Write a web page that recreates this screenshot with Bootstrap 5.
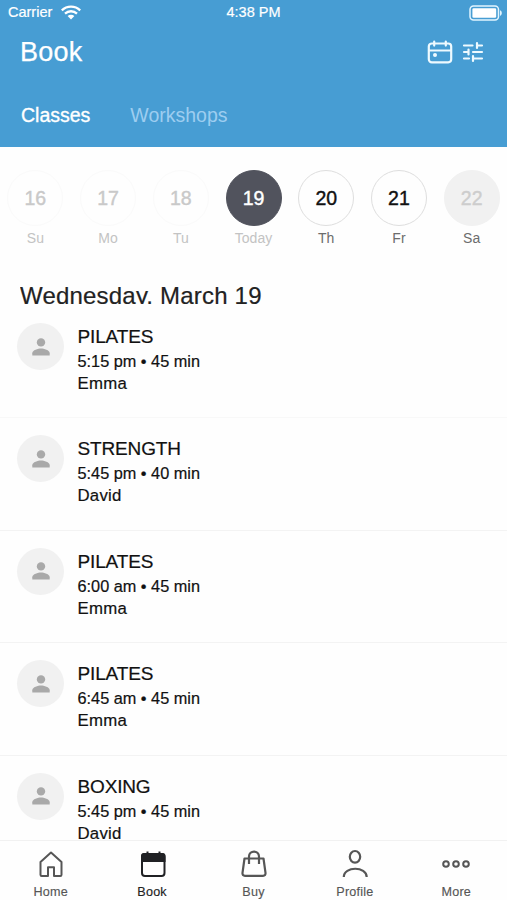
<!DOCTYPE html>
<html lang="en">
<head>
<meta charset="utf-8">
<meta name="viewport" content="width=device-width, initial-scale=1">
<title>Book</title>
<link href="https://cdn.jsdelivr.net/npm/bootstrap@5.3.0/dist/css/bootstrap.min.css" rel="stylesheet">
<style>
body{font-family:"Liberation Sans",Arial,sans-serif;color:#111;background:#fefefe;line-height:1}
.app{height:900px}
.top-bar{height:147px;background:#479dd3;color:#fff}
.status{height:25px;font-size:14.5px;padding:0 4px 0 8px;-webkit-text-stroke:.2px}
.status>*{flex:1 1 0}
.title-row{height:54px;padding:0 22px 0 20px}
.title-row h1{font-size:27px;letter-spacing:.2px;-webkit-text-stroke:.25px}
.tabs{font-size:19.5px;padding:27px 21px 0;gap:40px}
.tabs .active{-webkit-text-stroke:.35px}
.tabs .idle{color:#9dcdf0}
.days{padding-top:23px;margin:0 -1px}
.day{font-size:14px;color:#6c6c6c}
.disc{width:56px;height:56px;font-size:19.5px;padding-top:2px;border:1px solid #dedede;color:#111;-webkit-text-stroke:.4px;margin-bottom:5px}
.past{color:#c3c3c3}
.past .disc{color:#c9c9c9;border-color:#fafafa}
.today{color:#c3c3c3}
.today .disc{background:#51535d;border-color:#51535d;color:#fff}
.full .disc{background:#f1f1f1;border-color:#f1f1f1;color:#cdcdcd}
.date-title{font-size:24px;line-height:24px;height:20px;letter-spacing:.2px;margin:39px 0 1px 20px;color:#222;-webkit-text-stroke:.2px}
.session{height:112.5px;padding:17.2px 0 0 17px;gap:13.5px;border-bottom:1px solid #f3f3f3}
.session:first-child{height:113px;padding-top:18px;border-color:#f8f8f8}
.avatar{width:47px;height:47px;background:#f1f1f1}
.info{-webkit-text-stroke:.2px;padding-top:3px}
.name{font-size:19px;line-height:22px;letter-spacing:-.15px}
.when{font-size:16.3px;line-height:24px;margin-top:1px}
.coach{font-size:16.8px;line-height:22px;letter-spacing:.25px}
.tab-bar{height:60px;background:#fefefe;border-top:1px solid #f1f1f1;font-size:12.6px;color:#565656;letter-spacing:.2px;-webkit-text-stroke:.15px}
.tab-bar svg{margin:7px 0 8px}
.tab-bar .current{color:#222}
</style>
<script src="https://cdn.jsdelivr.net/npm/bootstrap@5.3.0/dist/js/bootstrap.bundle.min.js"></script>
</head>
<body>
<svg class="d-none"><symbol id="person" viewBox="0 0 18 18"><circle cx="9" cy="4.4" r="4.2" fill="#a9a9a9"/><path d="M.3 17.500v-2.200c0-3.100 5.800-4.700 8.700-4.700s8.700 1.600 8.700 4.700v2.200z" fill="#a9a9a9"/></symbol></svg>
<div class="app d-flex flex-column overflow-hidden">
  <header class="top-bar flex-shrink-0">
    <div class="status d-flex align-items-center">
      <div class="d-flex align-items-center gap-2"><span>Carrier</span>
        <svg width="21" height="15" viewBox="-1 0 21 15" fill="none" stroke="#fff" stroke-width="2.3"><path d="M.8 5.300c5.200-5 13.200-5 18.400 0M4 8.700c3.500-3.300 8.500-3.300 12 0"/><path d="M6.600 11.100c2-1.800 4.800-1.800 6.800 0L10 14.400z" fill="#fff" stroke="none"/></svg>
      </div>
      <div class="text-center pe-1">4:38 PM</div>
      <div class="text-end">
        <svg class="d-block ms-auto" width="34" height="16" viewBox="0 0 34 16"><rect x="1" y="1" width="28.500" height="14" rx="3.500" fill="none" stroke="#e2f5ff" stroke-width="1.500"/><rect x="3.400" y="3.300" width="23.800" height="9.400" rx="1.300" fill="#fff"/><path d="M31 5.200c2.400.8 2.400 4.800 0 5.600z" fill="#e2f5ff"/></svg>
      </div>
    </div>
    <div class="title-row d-flex align-items-center justify-content-between">
      <h1 class="m-0 fw-normal lh-1">Book</h1>
      <div class="d-flex align-items-center gap-2">
        <svg width="26" height="24" viewBox="0 0 26 24" fill="none" stroke="#eefaff" stroke-width="2.200" stroke-linecap="round"><rect x="1.800" y="3.500" width="22.400" height="18.800" rx="3"/><path d="M2 10.500h22M7.200 1.600v4M18.800 1.600v4"/><circle cx="8" cy="15" r="2" fill="#eefaff" stroke="none"/></svg>
        <svg width="24" height="22" viewBox="0 0 22 22" fill="none" stroke="#eefaff" stroke-width="2.200" stroke-linecap="round"><path d="M2 4.500h8.500M15 4.500h5M15 2v5M2 11h4M6.500 8.500v5M11 11h9M2 17.500h5M11 17.500h9M11 15v5"/></svg>
      </div>
    </div>
    <nav class="tabs d-flex"><span class="active">Classes</span><span class="idle">Workshops</span></nav>
  </header>

  <main class="flex-grow-1 overflow-hidden">
    <div class="days d-flex text-center">
      <div class="day past col d-flex flex-column align-items-center"><div class="disc rounded-circle d-flex align-items-center justify-content-center">16</div>Su</div>
      <div class="day past col d-flex flex-column align-items-center"><div class="disc rounded-circle d-flex align-items-center justify-content-center">17</div>Mo</div>
      <div class="day past col d-flex flex-column align-items-center"><div class="disc rounded-circle d-flex align-items-center justify-content-center">18</div>Tu</div>
      <div class="day today col d-flex flex-column align-items-center"><div class="disc rounded-circle d-flex align-items-center justify-content-center">19</div>Today</div>
      <div class="day col d-flex flex-column align-items-center"><div class="disc rounded-circle d-flex align-items-center justify-content-center">20</div>Th</div>
      <div class="day col d-flex flex-column align-items-center"><div class="disc rounded-circle d-flex align-items-center justify-content-center">21</div>Fr</div>
      <div class="day full col d-flex flex-column align-items-center"><div class="disc rounded-circle d-flex align-items-center justify-content-center">22</div>Sa</div>
    </div>
    <h2 class="date-title fw-normal overflow-hidden">Wednesday, March 19</h2>
    <div>
      <div class="session d-flex"><div class="avatar rounded-circle d-flex align-items-center justify-content-center"><svg width="18" height="18"><use href="#person"/></svg></div><div class="info"><div class="name">PILATES</div><div class="when">5:15 pm • 45 min</div><div class="coach">Emma</div></div></div>
      <div class="session d-flex"><div class="avatar rounded-circle d-flex align-items-center justify-content-center"><svg width="18" height="18"><use href="#person"/></svg></div><div class="info"><div class="name">STRENGTH</div><div class="when">5:45 pm • 40 min</div><div class="coach">David</div></div></div>
      <div class="session d-flex"><div class="avatar rounded-circle d-flex align-items-center justify-content-center"><svg width="18" height="18"><use href="#person"/></svg></div><div class="info"><div class="name">PILATES</div><div class="when">6:00 am • 45 min</div><div class="coach">Emma</div></div></div>
      <div class="session d-flex"><div class="avatar rounded-circle d-flex align-items-center justify-content-center"><svg width="18" height="18"><use href="#person"/></svg></div><div class="info"><div class="name">PILATES</div><div class="when">6:45 am • 45 min</div><div class="coach">Emma</div></div></div>
      <div class="session d-flex"><div class="avatar rounded-circle d-flex align-items-center justify-content-center"><svg width="18" height="18"><use href="#person"/></svg></div><div class="info"><div class="name">BOXING</div><div class="when">5:45 pm • 45 min</div><div class="coach">David</div></div></div>
    </div>
  </main>

  <nav class="tab-bar d-flex flex-shrink-0 text-center">
    <div class="col d-flex flex-column align-items-center"><svg width="30" height="30" viewBox="0 0 30 30" fill="none" stroke="#565656" stroke-width="2" stroke-linejoin="round"><path d="M15 4.500L4.500 14v12.800q0 1.200 1.200 1.200H12v-8.700h6v8.700h6.300q1.200 0 1.200-1.200V14z"/></svg>Home</div>
    <div class="current col d-flex flex-column align-items-center"><svg width="30" height="30" viewBox="-1 0 30 30" fill="none" stroke="#202124" stroke-width="2"><rect x="4" y="6" width="22.500" height="22" rx="3"/><path d="M4 13V8q0-2 2-2h18.500q2 0 2 2v5z" fill="#202124"/><path d="M9.500 3.500v4M21.500 3.500v4"/></svg>Book</div>
    <div class="col d-flex flex-column align-items-center"><svg width="30" height="30" viewBox="0 0 30 30" fill="none" stroke="#565656" stroke-width="2.200" stroke-linejoin="round"><path d="M5.500 10.500h19l2 14.300q.3 3-2.500 3H6q-2.800 0-2.500-3zM10 16V8.500c0-6.600 10-6.600 10 0V16"/></svg>Buy</div>
    <div class="col d-flex flex-column align-items-center"><svg width="30" height="30" viewBox="0 0 30 30" fill="none" stroke="#565656" stroke-width="2.200"><ellipse cx="15" cy="8.800" rx="5.200" ry="5.800"/><path d="M3.800 29c0-11 22.900-11 22.900 0"/></svg>Profile</div>
    <div class="col d-flex flex-column align-items-center"><svg width="30" height="30" viewBox="0 0 30 30" fill="none" stroke="#565656" stroke-width="2"><circle cx="5" cy="16" r="2.800"/><circle cx="15" cy="16" r="2.800"/><circle cx="25" cy="16" r="2.800"/></svg>More</div>
  </nav>
</div>
</body>
</html>
